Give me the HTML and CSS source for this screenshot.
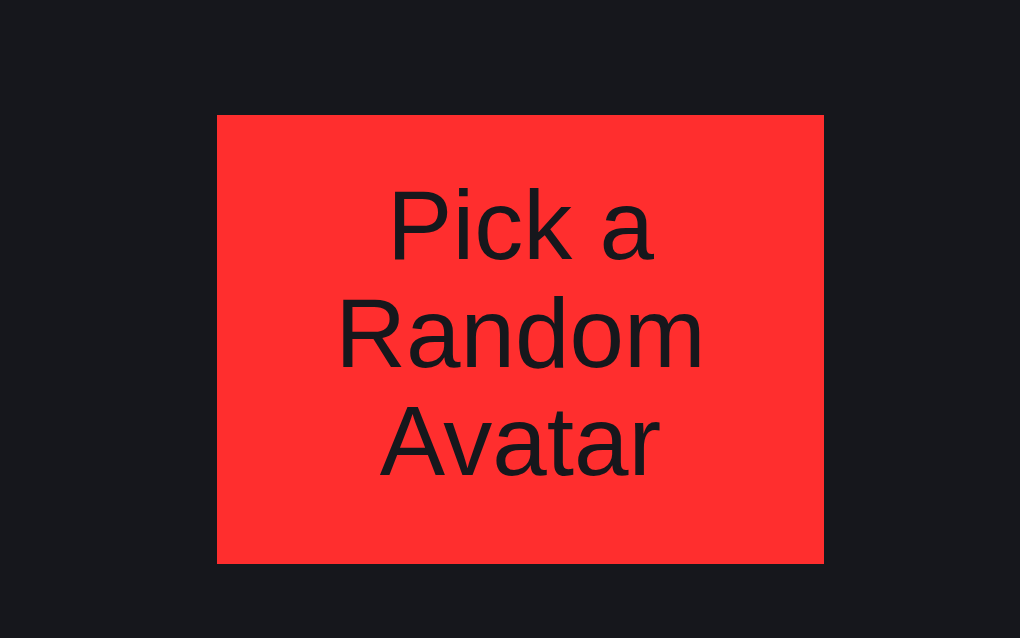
FILE: index.html
```html
<!DOCTYPE html>
<html>
<head>
<meta charset="utf-8">
<link rel="stylesheet" href="styles.css">
</head>
<body>
<div class="stage">
  <button class="pick">Pick a Random Avatar</button>
</div>
</body>
</html>
```
FILE: styles.css
```css
html, body {
  margin: 0;
  padding: 0;
  background: #16171c;
  height: 100%;
}
.stage {
  padding: 115px 0 0 217px;
}
.pick {
  width: 607px;
  height: 449px;
  background: #ff2e2e;
  border: none;
  margin: 0;
  padding: 0 150px 13px;
  box-sizing: border-box;
  display: flex;
  align-items: center;
  justify-content: center;
  text-align: center;
  font-family: "Liberation Sans", Arial, sans-serif;
  font-size: 98px;
  line-height: 108px;
  color: #16171c;
}
```
